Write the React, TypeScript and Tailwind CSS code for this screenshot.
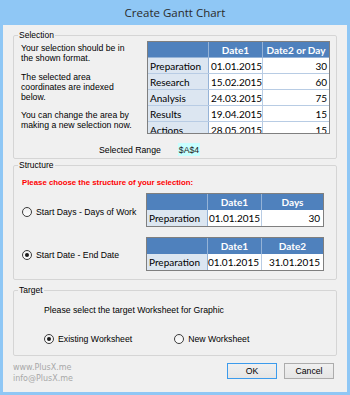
import React from "react";

const ui = { fontFamily: '"Liberation Sans", Arial, sans-serif' };
const xl = { fontFamily: 'Lato, "Liberation Sans", sans-serif' };

function Radio({ checked }: { checked?: boolean }) {
  return (
    <span className="w-[10px] h-[10px] rounded-full border border-[#3c3c3c] bg-gradient-to-b from-[#f0f0f0] to-white flex items-center justify-center shrink-0">
      {checked && <span className="w-[4px] h-[4px] rounded-full bg-[#1a1a1a]" />}
    </span>
  );
}

function Group({ title, children, className }: { title: string; children: React.ReactNode; className?: string }) {
  return (
    <fieldset className={"border border-[#d5d5d5] rounded-[2px] " + (className ?? "")}>
      <legend className="ml-[4px] px-[1px] text-[8.5px] leading-[10px] text-black">{title}</legend>
      {children}
    </fieldset>
  );
}

const rows = [
  ["Preparation", "01.01.2015", "30"],
  ["Research", "15.02.2015", "60"],
  ["Analysis", "24.03.2015", "75"],
  ["Results", "19.04.2015", "15"],
  ["Actions", "28.05.2015", "15"],
];

function SmallTable({ h2, v1, v2, v1Right }: { h2: string; v1: string; v2: string; v1Right?: boolean }) {
  return (
    <div className="w-[178px] border border-[#7f7f7f] bg-white text-[10px]" style={xl}>
      <div className="grid grid-cols-[61px_54px_1fr] h-[16px] bg-[#4f81bd] text-white font-bold">
        <div className="border-r border-[#95b3d7]" />
        <div className="border-r border-[#95b3d7] flex items-center justify-center">Date1</div>
        <div className="flex items-center justify-center">{h2}</div>
      </div>
      <div className="grid grid-cols-[61px_54px_1fr] h-[16px] text-black">
        <div className="bg-[#dce6f1] border-r border-[#95b3d7] flex items-center pl-[2px]">Preparation</div>
        <div className={"border-r border-[#b8cce4] flex items-center " + (v1Right ? "justify-end pr-[2px]" : "pl-[1px]")}>{v1}</div>
        <div className="flex items-center justify-end pr-[3px]">{v2}</div>
      </div>
    </div>
  );
}

export default function App() {
  return (
    <div className="w-[350px] h-[395px] bg-[#8fc7f5] flex flex-col px-[3px] pb-[3px]" style={ui}>
      <div className="h-[25px] flex items-center justify-center text-[11.5px] text-[#2b2b2b]" style={{ fontFamily: '"Open Sans", "Liberation Sans", sans-serif' }}>
        Create Gantt Chart
      </div>
      <div className="flex-1 bg-[#f0f0f0] px-[10px] pt-[5px] flex flex-col text-[8.7px] leading-[10px] text-black">
        <Group title="Selection">
          <div className="flex">
            <div className="w-[126px] pl-[7px] pt-[3px]">
              <p>Your selection should be in<br />the shown format.</p>
              <p className="mt-[9px]">The selected area<br />coordinates are indexed<br />below.</p>
              <p className="mt-[8px]">You can change the area by<br />making a new selection now.</p>
            </div>
            <div className="ml-auto mr-[6px] mt-[1px] w-[183px] h-[93px] overflow-hidden border border-[#7f7f7f] bg-white text-[10px]" style={xl}>
              <div className="grid grid-cols-[61px_54px_1fr] h-[16px] bg-[#4f81bd] text-white font-bold border-b border-[#95b3d7]">
                <div className="border-r border-[#95b3d7]" />
                <div className="border-r border-[#95b3d7] flex items-center justify-center">Date1</div>
                <div className="flex items-center justify-center">Date2 or Day</div>
              </div>
              {rows.map((r) => (
                <div key={r[0]} className="grid grid-cols-[61px_54px_1fr] h-[16px] border-b border-[#b8cce4] text-black">
                  <div className="bg-[#dce6f1] border-r border-[#95b3d7] flex items-center pl-[2px]">{r[0]}</div>
                  <div className="border-r border-[#b8cce4] flex items-center pl-[2px]">{r[1]}</div>
                  <div className="flex items-center justify-end pr-[2px]">{r[2]}</div>
                </div>
              ))}
            </div>
          </div>
          <div className="flex items-center mt-[9px] pb-[2px] h-[15px]">
            <span className="ml-[85px]">Selected Range</span>
            <span className="ml-[17px] h-[13px] px-[1px] flex items-center bg-[#c8ffff] text-[#1a1a1a]">$A$4</span>
          </div>
        </Group>

        <Group title="Structure" className="mt-[1px]">
          <div className="pl-[8px] pt-[8px] text-[#ff0000] font-bold text-[7.8px]">Please choose the structure of your selection:</div>
          <div className="flex items-center mt-[5px] pl-[8px]">
            <div className="w-[124px] flex items-center gap-[4px] pt-[3px]">
              <Radio />
              <span>Start Days - Days of Work</span>
            </div>
            <SmallTable h2="Days" v1="01.01.2015" v2="30" />
          </div>
          <div className="flex items-center mt-[10px] pl-[8px] pb-[8px]">
            <div className="w-[124px] flex items-center gap-[4px] pt-[1px]">
              <Radio checked />
              <span>Start Date - End Date</span>
            </div>
            <SmallTable h2="Date2" v1="01.01.2015" v2="31.01.2015" v1Right />
          </div>
        </Group>

        <Group title="Target" className="mt-[5px]">
          <div className="pl-[30px] pt-[10px]">Please select the target Worksheet for Graphic</div>
          <div className="flex items-center pl-[30px] mt-[19px] pb-[11px]">
            <Radio checked />
            <span className="ml-[4px]">Existing Worksheet</span>
            <span className="ml-[42px]"><Radio /></span>
            <span className="ml-[4px]">New Worksheet</span>
          </div>
        </Group>

        <div className="flex items-start">
          <div className="mt-[6px] text-[8px] leading-[11px] text-[#a8a8a8]" style={{ fontFamily: '"DejaVu Sans", sans-serif' }}>
            <div>www.PlusX.me</div>
            <div>info@PlusX.me</div>
          </div>
          <div className="ml-auto mr-[3px] mt-[7px] flex gap-[7px]">
            <button className="w-[50px] h-[16px] border border-[#3c9bec] bg-gradient-to-b from-[#f0f0f0] to-[#e5e5e5] text-[8.7px] leading-none flex items-center justify-center">OK</button>
            <button className="w-[50px] h-[16px] border border-[#acacac] bg-gradient-to-b from-[#f0f0f0] to-[#e5e5e5] text-[8.7px] leading-none flex items-center justify-center">Cancel</button>
          </div>
        </div>
      </div>
    </div>
  );
}
